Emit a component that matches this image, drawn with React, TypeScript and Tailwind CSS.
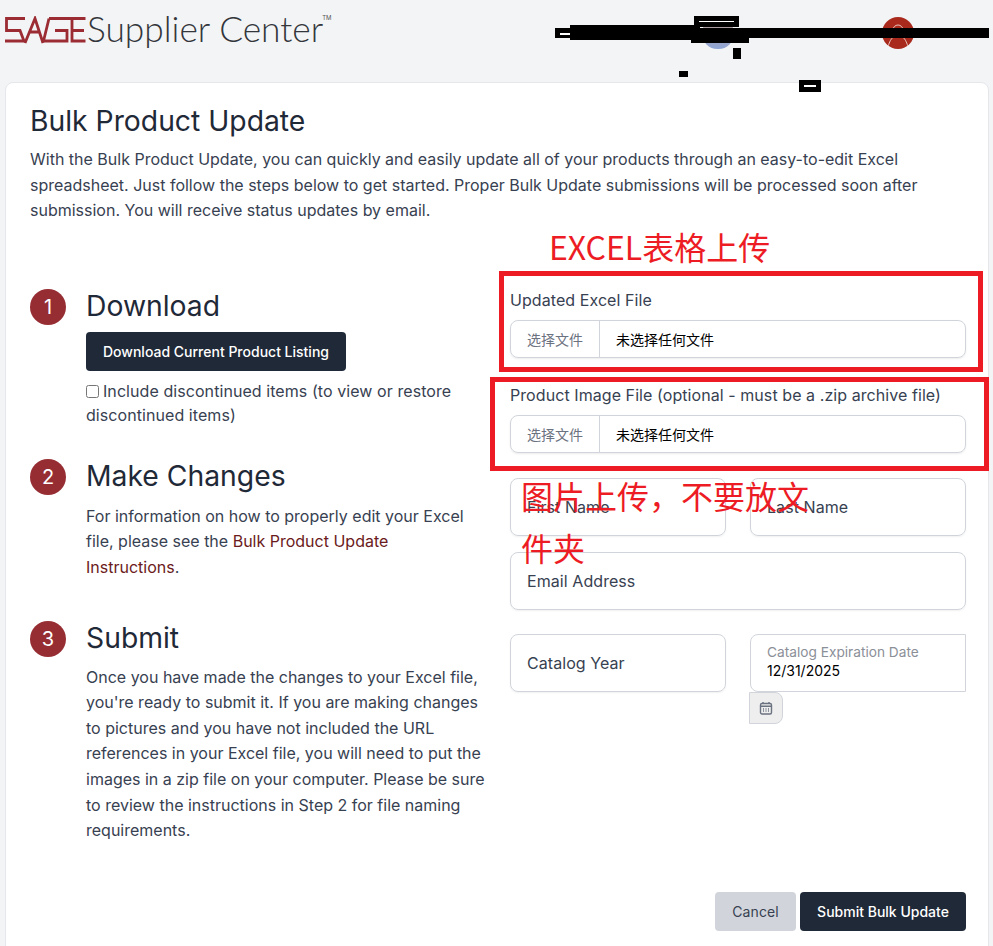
const Step = ({ n, title }: { n: number; title: string }) => (
  <div className="flex items-center gap-5 h-9">
    <div className="w-9 h-9 rounded-full bg-[#962d33] text-white flex items-center justify-center text-[20px] shrink-0">{n}</div>
    <h2 className="text-[28.3px] leading-[34px] pb-px text-[#1f2937]">{title}</h2>
  </div>
);

const FileRow = ({ label }: { label: string }) => (
  <div>
    <div className="text-[16px] leading-6 text-[#374151] tracking-[0.07px] mb-2">{label}</div>
    <div className="flex h-[38px] rounded-lg border border-[#d1d5db] shadow-[0_1px_2px_rgba(0,0,0,0.08)] text-[14px] items-stretch">
      <div className="w-[89px] flex items-center justify-center pt-px border-r border-[#d1d5db] text-[#6b7280]">选择文件</div>
      <div className="flex-1 flex items-center pt-px pl-4 text-black">未选择任何文件</div>
    </div>
  </div>
);

const Field = ({ label, className = "" }: { label: string; className?: string }) => (
  <div className={`h-[58px] rounded-lg border border-[#d1d5db] shadow-[0_1px_2px_rgba(0,0,0,0.06)] flex items-center pl-4 text-[16px] text-[#374151] tracking-[0.07px] ${className}`}>{label}</div>
);

const Bars = () => {
  const bars = [
    "left-[555px] top-[28px] w-[434px] h-[10px]",
    "left-[570px] top-[25px] w-[130px] h-[15px]",
    "left-[694px] top-[16px] w-[45px] h-[11px]",
    "left-[691px] top-[30px] w-[58px] h-[13px]",
    "left-[733px] top-[48px] w-[8px] h-[11px]",
    "left-[679px] top-[71px] w-[9px] h-[6px]",
    "left-[799px] top-[80px] w-[22px] h-[12px]",
  ];
  return (
    <>
      {bars.map((b) => (
        <div key={b} className={`absolute bg-black ${b}`} />
      ))}
      <div className="absolute left-[560px] top-[33px] w-[10px] h-[2px] bg-white" />
      <div className="absolute left-[699px] top-[21px] w-[35px] h-[1px] bg-white" />
      <div className="absolute left-[804px] top-[85px] w-[12px] h-[2px] bg-white" />
    </>
  );
};

export default function App() {
  return (
    <div className="relative h-[946px] w-[993px] overflow-hidden bg-[#f3f4f6] font-['Inter','Noto_Sans_CJK_SC',sans-serif] text-[16px]">
      <header className="h-[82px] relative">
        <div className="flex items-start pl-[5px] pt-[8px]">
          <svg width="81" height="28" viewBox="0 0 81 28" className="mt-[8px]" fill="none" stroke="#9b2c33" strokeWidth="2.8">
            <path d="M20 2.5H1.5V14.5H15L19 25H0" />
            <path d="M20 27L30 2.5L38 27 M25 16H35" />
            <path d="M44 2.5L38.5 25H62V14.5H50" />
            <path d="M44 2.5H80.5 M80.5 25H67V2.5 M67 14.5H79" />
          </svg>
          <div className="ml-[1px] -mt-px font-['Lato',sans-serif] font-light text-[35.3px] leading-[44px] text-[#33363b] whitespace-nowrap">Supplier Center</div>
          <div className="text-[6px] leading-none mt-[7px] -ml-px text-[#555]">TM</div>
        </div>
        <div className="absolute left-[702px] top-[18px] w-8 h-[31px] rounded-full bg-linear-to-b from-[#b89888] to-[#8ea6d8]" />
        <div className="absolute left-[882px] top-[17px] w-8 h-8 rounded-full bg-[#a92a1d] overflow-hidden">
          <svg width="32" height="32" viewBox="0 0 32 32" fill="none" stroke="#e8c4bc" strokeWidth="1">
            <circle cx="16" cy="13" r="5" />
            <path d="M6 30C8 22 11 20 13 19M26 30C24 22 21 20 19 19" />
          </svg>
        </div>
      </header>

      <main className="mx-[5px] w-[984px] h-[900px] rounded-t-lg bg-white border border-[#e5e7eb] px-6 pt-[18px]">
        <h1 className="text-[28.3px] leading-[40px] text-[#1f2937]">Bulk Product Update</h1>
        <p className="mt-[6px] text-[16px] leading-[25.6px] text-[#374151] w-[934px]">
          With the Bulk Product Update, you can quickly and easily update all of your products through an easy-to-edit Excel spreadsheet. Just follow the steps below to get started. Proper Bulk Update submissions will be processed soon after submission. You will receive status updates by email.
        </p>

        <div className="grid grid-cols-[456px_456px] gap-6 mt-[65px]">
          <div className="text-[#374151]">
            <Step n={1} title="Download" />
            <div className="pl-14">
              <button className="mt-[7px] h-[39px] w-[260px] rounded bg-[#1f2937] text-white text-[14px] font-[550]">Download Current Product Listing</button>
              <label className="block mt-2 leading-6 text-[16px] tracking-[0.07px]">
                <input type="checkbox" className="mr-[4px] align-[-1px] w-[13px] h-[13px]" />
                Include discontinued items (to view or restore discontinued items)
              </label>
            </div>

            <div className="mt-[32px]"><Step n={2} title="Make Changes" /></div>
            <p className="pl-14 mt-[9px] leading-[25.6px]">
              For information on how to properly edit your Excel file, please see the <span className="text-[#6b1a20]">Bulk Product Update Instructions</span>.
            </p>

            <div className="mt-[40px]"><Step n={3} title="Submit" /></div>
            <p className="pl-14 mt-[8px] leading-[25.6px]">
              Once you have made the changes to your Excel file, you're ready to submit it. If you are making changes to pictures and you have not included the URL references in your Excel file, you will need to put the images in a zip file on your computer. Please be sure to review the instructions in Step 2 for file naming requirements.
            </p>
          </div>

          <div className="-mt-px">
            <FileRow label="Updated Excel File" />
            <div className="mt-[25px]"><FileRow label="Product Image File (optional - must be a .zip archive file)" /></div>
            <div className="grid grid-cols-2 gap-6 mt-[25px]">
              <Field label="First Name" />
              <Field label="Last Name" />
            </div>
            <Field label="Email Address" className="mt-4" />
            <div className="grid grid-cols-2 gap-6 mt-6">
              <Field label="Catalog Year" />
              <div>
                <div className="h-[58px] rounded-l-lg border border-[#d1d5db] pl-4 pt-[9px]">
                  <div className="text-[13.7px] leading-[17px] text-[#8b8f98]">Catalog Expiration Date</div>
                  <div className="text-[14px] leading-[19px] text-black">12/31/2025</div>
                </div>
                <button className="-ml-px w-[34px] h-8 rounded-br-lg rounded-tr-lg bg-[#eeeeee] border border-[#d1d5db] flex items-center justify-center">
                  <svg width="14" height="14" viewBox="0 0 14 14" fill="none" stroke="#6b7280" strokeWidth="1.4">
                    <rect x="1.5" y="2.5" width="11" height="10.5" rx="1.5" />
                    <path d="M1.5 5.2H12.5M4 1V3M10 1V3" />
                    <path d="M4 8H5M6.5 8H7.5M9 8H10M4 10H5M6.5 10H7.5M9 10H10" />
                  </svg>
                </button>
              </div>
            </div>
          </div>
        </div>

        <div className="absolute right-[27px] top-[892px] flex gap-1">
          <button className="w-[81px] h-[39px] rounded bg-[#d1d5db] text-[14px] text-[#374151] tracking-[0.07px]">Cancel</button>
          <button className="w-[166px] h-[39px] rounded bg-[#1f2937] text-[14px] text-white font-[550]">Submit Bulk Update</button>
        </div>
      </main>

      <div className="absolute left-[499px] top-[271px] w-[484px] h-[101px] border-[5px] border-[#ed1c24]" />
      <div className="absolute left-[490px] top-[377px] w-[499px] h-[94px] border-[5px] border-[#ed1c24]" />
      <div className="absolute left-[549px] top-[226px] font-['Noto_Sans_CJK_SC',sans-serif] text-[32px] leading-10 text-[#ed1c24] whitespace-nowrap">EXCEL表格上传</div>
      <div className="absolute left-[521px] top-[469px] w-[300px] font-['Noto_Sans_CJK_SC',sans-serif] text-[32px] leading-[52px] text-[#ed1c24]">图片上传，不要放文件夹</div>

      <Bars />
    </div>
  );
}
